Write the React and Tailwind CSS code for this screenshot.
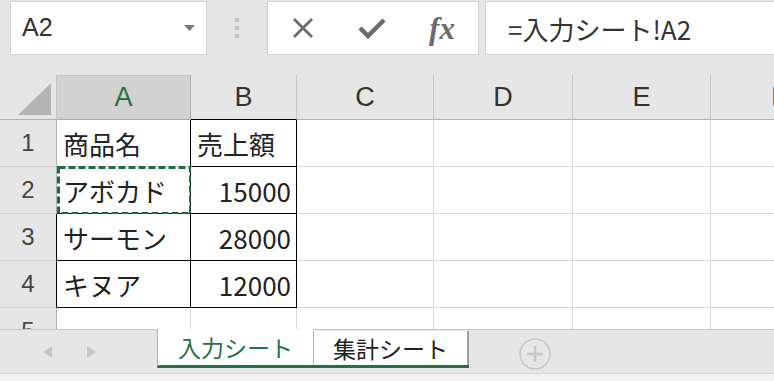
import React from "react";

const JP = "font-['Noto_Sans_CJK_JP',sans-serif]";
const LAT = "font-['Liberation_Sans',sans-serif]";

const GRID = "border-r border-b border-r-[#d9d9d9] border-b-[#d9d9d9]";

function ColHead({ label, cls }) {
  return (
    <div className={`flex items-center justify-center text-[27px] ${LAT} ${cls}`}>
      {label}
    </div>
  );
}

function RowHead({ n, cls }) {
  return (
    <div
      className={`flex items-center justify-center bg-[#e6e6e6] border-r border-b border-b-[#d4d4d4] text-[24px] text-[#444] ${LAT} ${cls}`}
    >
      {n}
    </div>
  );
}

function Cell({ text, right, cls, children }) {
  return (
    <div
      className={`relative flex items-center text-[26px] text-[#222] ${JP} ${
        right ? "justify-end pr-[5px]" : "pl-[6px]"
      } border-r border-b ${cls}`}
    >
      {text}
      {children}
    </div>
  );
}

function Empty() {
  return <div className={`bg-white ${GRID}`} />;
}

export default function App() {
  const emptyRow = (k) => (
    <React.Fragment key={k}>
      <Empty />
      <Empty />
      <Empty />
      <Empty />
    </React.Fragment>
  );
  return (
    <div className="w-[774px] h-[381px] overflow-hidden bg-[#e6e6e6] flex flex-col">
      {/* Toolbar */}
      <div className="h-[75px] shrink-0 flex items-start pt-[1px]">
        <div className="ml-[10px] w-[197px] h-[54px] shrink-0 bg-white border border-[#d0d0d0] flex items-center pl-[11px] pr-[11px]">
          <span className={`flex-1 text-[25px] text-[#333] ${LAT}`}>A2</span>
          <svg width="11" height="6" viewBox="0 0 11 6">
            <path d="M0 0H11L5.5 6Z" fill="#7a7a7a" />
          </svg>
        </div>
        <div className="w-[60px] h-[54px] shrink-0 flex flex-col items-center justify-center gap-[4px] pb-[1px]">
          <div className="w-[4px] h-[4px] bg-[#c2c2c2]" />
          <div className="w-[4px] h-[4px] bg-[#c2c2c2]" />
          <div className="w-[4px] h-[4px] bg-[#c2c2c2]" />
        </div>
        <div className="w-[212px] h-[54px] shrink-0 bg-white border border-[#d0d0d0] flex items-center">
          <div className="w-[69px] flex justify-center">
            <svg width="22" height="22" viewBox="0 0 22 22">
              <path d="M2 2L20 20M20 2L2 20" stroke="#6b6b6b" strokeWidth="2.8" />
            </svg>
          </div>
          <div className="w-[70px] flex justify-center">
            <svg width="28" height="22" viewBox="0 0 28 22">
              <path d="M2 11L10 19L26 3" stroke="#6b6b6b" strokeWidth="4.5" fill="none" />
            </svg>
          </div>
          <div className="w-[70px] flex justify-center">
            <span className="italic font-semibold font-['Liberation_Serif',serif] text-[31px] text-[#6b6b6b] leading-none">
              fx
            </span>
          </div>
        </div>
        <div className="ml-[6px] flex-1 h-[54px] bg-white border border-r-0 border-[#d0d0d0] flex items-center pl-[22px]">
          <span className={`text-[26px] text-[#333] ${JP}`}>=入力シート!A2</span>
        </div>
      </div>

      {/* Grid */}
      <div className="h-[254px] shrink-0 overflow-hidden bg-white">
        <div className="grid grid-cols-[57px_134px_106px_137px_139px_138px_138px] grid-rows-[45px_47px_47px_47px_47px_47px] w-[849px]">
          {/* header row */}
          <div className="bg-[#e6e6e6] border-r border-b border-r-[#c6c6c6] border-b-[#b0b0b0] relative">
            <svg width="57" height="44" viewBox="0 0 57 44" className="block">
              <polygon points="18,40 51,40 51,8" fill="#b4b4b4" />
            </svg>
          </div>
          <ColHead
            label="A"
            cls="bg-[#d2d2d2] text-[#217346] border-r border-b border-t border-t-[#c6c6c6] border-r-[#a9a9a9] border-b-[#a9a9a9]"
          />
          <ColHead label="B" cls="bg-[#e6e6e6] text-[#333] border-r border-b border-r-[#c6c6c6] border-b-black" />
          <ColHead label="C" cls="bg-[#e6e6e6] text-[#333] border-r border-b border-r-[#c6c6c6] border-b-[#b0b0b0]" />
          <ColHead label="D" cls="bg-[#e6e6e6] text-[#333] border-r border-b border-r-[#c6c6c6] border-b-[#b0b0b0]" />
          <ColHead label="E" cls="bg-[#e6e6e6] text-[#333] border-r border-b border-r-[#c6c6c6] border-b-[#b0b0b0]" />
          <ColHead label="F" cls="bg-[#e6e6e6] text-[#333] border-r border-b border-r-[#c6c6c6] border-b-[#b0b0b0]" />

          {/* row 1 */}
          <RowHead n="1" cls="border-r-[#b3b3b3]" />
          <Cell text="商品名" cls="bg-white border-r-black border-b-[#d9d9d9]" />
          <Cell text="売上額" cls="bg-white border-r-black border-b-black" />
          {emptyRow("r1")}

          {/* row 2 */}
          <RowHead n="2" cls="border-r-[#b3b3b3]" />
          <Cell text="アボカド" cls="bg-white border-r-black border-b-black">
            <svg className="absolute left-[0px] top-[-1px]" width="135" height="49" viewBox="0 0 135 49">
              <rect
                x="1.5"
                y="1.5"
                width="132"
                height="46"
                fill="none"
                stroke="#1e6b3f"
                strokeWidth="3"
                strokeDasharray="7 3"
              />
            </svg>
          </Cell>
          <Cell text="15000" right cls="bg-white border-r-black border-b-black" />
          {emptyRow("r2")}

          {/* row 3 */}
          <RowHead n="3" cls="border-r-black" />
          <Cell text="サーモン" cls="bg-white border-r-black border-b-black" />
          <Cell text="28000" right cls="bg-white border-r-black border-b-black" />
          {emptyRow("r3")}

          {/* row 4 */}
          <RowHead n="4" cls="border-r-black" />
          <Cell text="キヌア" cls="bg-white border-r-black border-b-black" />
          <Cell text="12000" right cls="bg-white border-r-black border-b-black" />
          {emptyRow("r4")}

          {/* row 5 */}
          <RowHead n="5" cls="border-r-[#b3b3b3]" />
          <Empty />
          <Empty />
          {emptyRow("r5")}
        </div>
      </div>

      {/* Tab bar */}
      <div className="h-[44px] shrink-0 flex items-start bg-[#e6e6e6]">
        <div className="w-[157px] h-full border-t border-[#c6c6c6] flex items-start pt-[16px]">
          <svg className="ml-[43px]" width="9" height="12" viewBox="0 0 9 12">
            <path d="M9 0V12L0 6Z" fill="#c8c8c8" />
          </svg>
          <svg className="ml-[35px]" width="9" height="12" viewBox="0 0 9 12">
            <path d="M0 0V12L9 6Z" fill="#c8c8c8" />
          </svg>
        </div>
        <div
          className={`w-[156px] h-[39px] bg-white border-l border-l-[#b3b3b3] border-b-[3px] border-b-[#217346] flex items-center justify-center text-[23px] text-[#217346] ${JP}`}
        >
          入力シート
        </div>
        <div className="w-[156px] h-[39px] border-t border-t-[#c6c6c6] border-b-[3px] border-b-[#217346] pt-[1px] flex">
          <div
            className={`flex-1 bg-white border-l border-l-[#b3b3b3] border-r-2 border-r-[#a0a0a0] flex items-center justify-center text-[23px] text-[#222] ${JP}`}
          >
            集計シート
          </div>
        </div>
        <div className="flex-1 h-full border-t border-[#c6c6c6] pl-[50px] pt-[8px]">
          <svg width="32" height="32" viewBox="0 0 32 32">
            <circle cx="16" cy="16" r="15" fill="none" stroke="#c8c8c8" strokeWidth="1.6" />
            <path d="M16 8V24M8 16H24" stroke="#c8c8c8" strokeWidth="2.6" />
          </svg>
        </div>
      </div>
      <div className="h-[8px] shrink-0 bg-[#f3f3f3] border-t border-[#d6d6d6]" />
    </div>
  );
}
